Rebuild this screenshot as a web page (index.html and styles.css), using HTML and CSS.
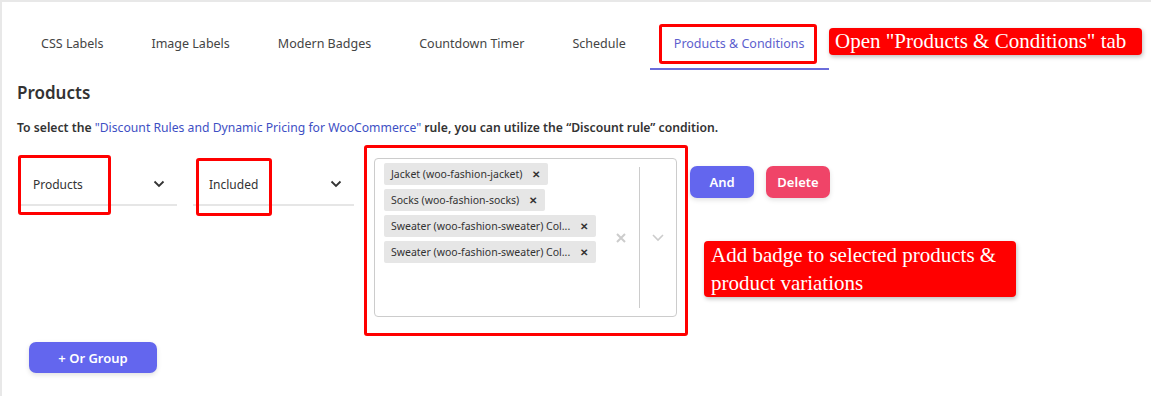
FILE: index.html
```html
<!DOCTYPE html>
<html lang="en">
<head>
    <meta charset="UTF-8">
    <meta name="viewport" content="width=device-width, initial-scale=1.0">
    <title>Products & Conditions</title>
    <link rel="stylesheet" href="styles.css">
</head>
<body>
<div class="page">

    <nav class="tabs">
        <a class="tab">CSS Labels</a>
        <a class="tab">Image Labels</a>
        <a class="tab">Modern Badges</a>
        <a class="tab">Countdown Timer</a>
        <a class="tab">Schedule</a>
        <a class="tab active">Products &amp; Conditions</a>
    </nav>

    <h2 class="section-title">Products</h2>
    <p class="hint">To select the <a class="link">"Discount Rules and Dynamic Pricing for WooCommerce"</a> rule, you can utilize the “Discount rule” condition.</p>

    <div class="rule-row">
        <div class="select select-type">
            <span>Products</span>
            <svg class="chev" width="12" height="8" viewBox="0 0 12 8"><path d="M1.5 1.5 6 6l4.5-4.5" fill="none" stroke="#333" stroke-width="1.8"/></svg>
        </div>
        <div class="select select-op">
            <span>Included</span>
            <svg class="chev" width="12" height="8" viewBox="0 0 12 8"><path d="M1.5 1.5 6 6l4.5-4.5" fill="none" stroke="#333" stroke-width="1.8"/></svg>
        </div>

        <div class="multi">
            <div class="values">
                <div class="tag"><span class="tag-text">Jacket (woo-fashion-jacket)</span><span class="tag-x">✕</span></div>
                <div class="tag"><span class="tag-text">Socks (woo-fashion-socks)</span><span class="tag-x">✕</span></div>
                <div class="tag"><span class="tag-text">Sweater (woo-fashion-sweater) Col...</span><span class="tag-x">✕</span></div>
                <div class="tag"><span class="tag-text">Sweater (woo-fashion-sweater) Col...</span><span class="tag-x">✕</span></div>
            </div>
            <div class="indicators">
                <svg class="clear" width="12" height="12" viewBox="0 0 12 12"><path d="M2 2l8 8M10 2l-8 8" stroke="#ccc" stroke-width="2"/></svg>
                <span class="sep"></span>
                <svg class="drop" width="14" height="9" viewBox="0 0 14 9"><path d="M2 2l5 5 5-5" fill="none" stroke="#ccc" stroke-width="1.6"/></svg>
            </div>
        </div>

        <div class="actions">
            <button class="btn btn-and">And</button>
            <button class="btn btn-delete">Delete</button>
        </div>
    </div>

    <button class="btn btn-or">+ Or Group</button>

    <!-- screenshot annotations -->
    <div class="mark mark-tab"></div>
    <div class="note note-tab">Open "Products &amp; Conditions" tab</div>
    <div class="mark mark-type"></div>
    <div class="mark mark-op"></div>
    <div class="mark mark-multi"></div>
    <div class="note note-multi">Add badge to selected products &amp; product variations</div>
</div>
</body>
</html>
```

FILE: styles.css
```css
body {
    margin: 0;
    font-family: "Noto Sans", "Open Sans", sans-serif;
    color: #333;
    background-color: #fff;
}
.page {
    position: relative;
    height: 394px;
    border-top: 2px solid #e8e8e8;
    border-left: 2px solid #e8e8e8;
    padding: 14px 0 0 15px;
}
.tabs {
    display: flex;
}
.tab {
    padding: 18px 24px 14px;
    font-size: 12.5px;
    line-height: 20px;
    color: #444;
    border-bottom: 2px solid transparent;
}
.tab.active {
    color: #5d5fce;
    border-bottom-color: #6b6ddb;
}
.section-title {
    margin: 11px 0 0;
    font-size: 17px;
    line-height: 24px;
    font-weight: 600;
    color: #333;
}
.hint {
    margin: 14px 0 0;
    font-size: 12.2px;
    line-height: 18px;
    font-weight: 600;
    color: #333;
}
.link {
    color: #3e4fc4;
    font-weight: 400;
}
.rule-row {
    display: flex;
    align-items: flex-start;
    margin-top: 21px;
    padding-left: 3px;
}
.select {
    display: flex;
    align-items: center;
    justify-content: space-between;
    height: 38px;
    padding: 7px 12px 1px 13px;
    border-bottom: 2px solid #e6e6e6;
    font-size: 12px;
}
.select-type {
    width: 132px;
    margin-right: 16px;
}
.select-op {
    width: 133px;
    padding-left: 16px;
    margin-right: 20px;
}
.multi {
    display: flex;
    width: 301px;
    height: 157px;
    border: 1px solid #ccc;
    border-radius: 4px;
}
.values {
    flex: 1;
    display: flex;
    flex-direction: column;
    align-items: flex-start;
    gap: 4px;
    padding: 4px 0 0 9px;
    min-width: 0;
}
.tag {
    display: flex;
    align-items: center;
    height: 22px;
    background-color: #e6e6e6;
    border-radius: 2px;
    font-size: 10.5px;
}
.tag-text {
    padding: 0 6px 0 7px;
    white-space: nowrap;
}
.tag-x {
    padding: 0 8px 0 4px;
    font-size: 10px;
    font-weight: 700;
    color: #333;
}
.indicators {
    display: flex;
    align-items: center;
}
.clear {
    margin-right: 12px;
}
.sep {
    width: 1px;
    align-self: stretch;
    margin: 8px 0;
    background-color: #ccc;
}
.drop {
    margin: 0 11px;
}
.actions {
    display: flex;
    gap: 12px;
    margin: 8px 0 0 13px;
}
.btn {
    height: 32px;
    border: none;
    border-radius: 7px;
    color: #fff;
    font-family: inherit;
    font-size: 13px;
    font-weight: 600;
    cursor: pointer;
    box-shadow: 0 2px 5px rgba(0, 0, 0, 0.12);
}
.btn-and {
    width: 64px;
    background-color: #6366ee;
}
.btn-delete {
    width: 64px;
    background-color: #f04468;
}
.btn-or {
    display: block;
    width: 128px;
    height: 31px;
    margin: 25px 0 0 12px;
    background-color: #6366ee;
}
.mark {
    position: absolute;
    border: 3px solid #f00;
    border-radius: 3px;
}
.mark-tab {
    left: 657px;
    top: 22px;
    width: 152px;
    height: 34px;
}
.mark-type {
    left: 16px;
    top: 153px;
    width: 87px;
    height: 54px;
}
.mark-op {
    left: 194px;
    top: 156px;
    width: 70px;
    height: 52px;
}
.mark-multi {
    left: 362px;
    top: 143px;
    width: 318px;
    height: 185px;
}
.note {
    position: absolute;
    background-color: #f00;
    color: #fff;
    font-family: "Liberation Serif", serif;
    font-size: 21px;
    border-radius: 4px;
    box-shadow: 1px 2px 4px rgba(0, 0, 0, 0.25);
}
.note-tab {
    left: 827px;
    top: 26px;
    height: 27px;
    line-height: 27px;
    padding: 0 16px 0 6px;
}
.note-multi {
    left: 702px;
    top: 239px;
    width: 298px;
    padding: 0 7px;
    line-height: 28px;
}
```
